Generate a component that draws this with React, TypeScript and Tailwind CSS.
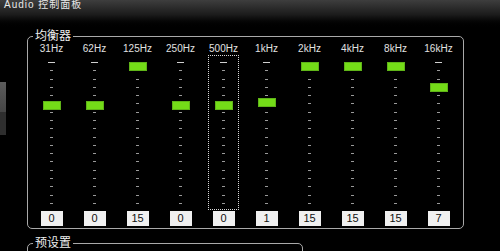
import React from "react";

const bands = [
  { label: "31Hz", value: 0 },
  { label: "62Hz", value: 0 },
  { label: "125Hz", value: 15 },
  { label: "250Hz", value: 0 },
  { label: "500Hz", value: 0, focused: true },
  { label: "1kHz", value: 1 },
  { label: "2kHz", value: 15 },
  { label: "4kHz", value: 15 },
  { label: "8kHz", value: 15 },
  { label: "16kHz", value: 7 },
];

const TICKS = 18;

function Band({
  label,
  value,
  focused,
}: {
  label: string;
  value: number;
  focused?: boolean;
}) {
  return (
    <div className="flex flex-col items-center">
      <div className="h-[12px] text-[10px] leading-[12px] text-[#e2e2e2]">
        {label}
      </div>
      <div
        className={`relative h-[155px] w-[31px] border ${
          focused ? "border-dotted border-[#d8d8d8]" : "border-transparent"
        }`}
      >
        {/* scale */}
        <div className="mt-[6px] flex h-[142px] flex-col items-center justify-between">
          {Array.from({ length: TICKS }).map((_, i) => (
            <div
              key={i}
              className={`h-px ${
                i === 0 ? "w-[7px] bg-[#cfcfcf]" : "w-[3px] bg-[#9a9a9a]"
              }`}
            />
          ))}
        </div>
        {/* knob */}
        <div
          className="absolute left-1/2 h-[9px] w-[18px] -translate-x-1/2 border border-[#5fb418] bg-[#74dc18]"
          style={{ top: 45 - 2.6 * value }}
        />
      </div>
      <div className="mt-px flex h-[15px] w-[22px] items-center justify-center bg-[#f0f0f0] text-[11px] leading-none text-[#111]">
        {value}
      </div>
    </div>
  );
}

export default function App() {
  return (
    <div
      className="h-[251px] w-[500px] overflow-hidden bg-black"
      style={{ fontFamily: '"Liberation Sans", "Noto Sans CJK SC", sans-serif' }}
    >
      {/* Title bar */}
      <div className="h-[29px] bg-linear-to-b from-[#3e3e3e] via-[#1c1c1c] to-black px-[4px]">
        <div className="text-[10px] leading-[10px] tracking-[1px] text-[#e8e8e8]">
          Audio 控制面板
        </div>
      </div>

      <div className="flex">
        {/* side tab */}
        <div className="w-[27px] shrink-0">
          <div className="mt-[53px] flex h-[53px] w-[6px] flex-col">
            <div className="h-[30px] bg-linear-to-b from-[#5c5c5c] to-[#454545]" />
            <div className="flex-1 bg-[#2e2e2e]" />
          </div>
        </div>

        <div className="flex flex-col">
          <fieldset className="w-[437px] rounded-[5px] border border-[#a9a9a9] pb-[2px]">
            <legend className="ml-[5px] px-[2px] text-[12px] leading-[14px] text-[#eeeeee]">
              均衡器
            </legend>
            <div className="ml-[2px] grid w-[430px] grid-cols-10">
              {bands.map((b) => (
                <Band key={b.label} {...b} />
              ))}
            </div>
          </fieldset>

          <fieldset className="mt-[7px] h-[40px] w-[276px] rounded-[5px] border border-[#a9a9a9]">
            <legend className="ml-[5px] px-[2px] text-[12px] leading-[14px] text-[#eeeeee]">
              预设置
            </legend>
          </fieldset>
        </div>
      </div>
    </div>
  );
}
